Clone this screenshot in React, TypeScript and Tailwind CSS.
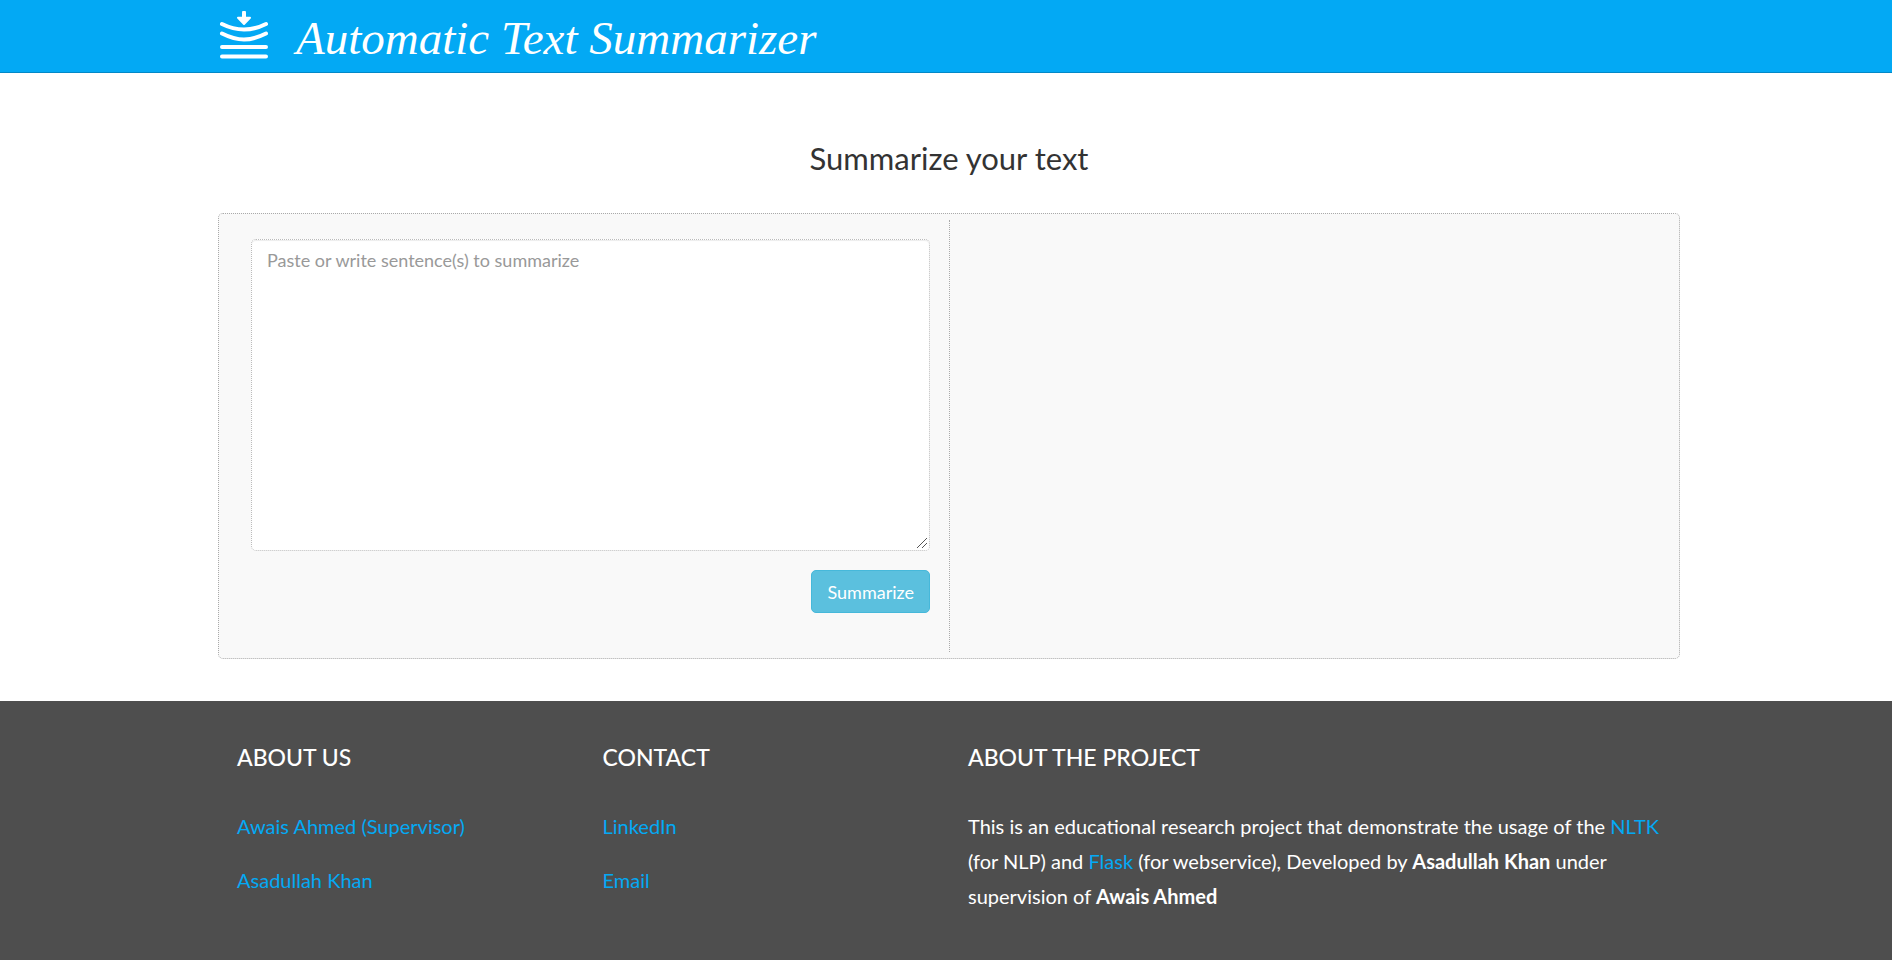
import type { ReactNode } from "react";

function LogoIcon() {
  return (
    <svg
      viewBox="0 0 50 50"
      className="h-[50px] w-[50px] shrink-0"
      fill="none"
      stroke="white"
      strokeWidth="4"
      strokeLinecap="round"
      strokeLinejoin="round"
      aria-hidden="true"
    >
      <path d="M26 1.5V8" />
      <path d="M20 6.8H32L26 13Z" fill="white" strokeWidth="2" />
      <path d="M4 13C11 16.5 17 18.5 26 18.5S41 16.5 48 13" />
      <path d="M4 22.5C11 26 17 28.5 26 28.5S41 26 48 22.5" />
      <path d="M4 36H48M4 45.5H48" />
    </svg>
  );
}

function ResizeGrip() {
  return (
    <svg
      viewBox="0 0 12 12"
      className="pointer-events-none absolute right-0.5 bottom-0.5 h-3 w-3"
      stroke="#555555"
      strokeWidth="1"
      aria-hidden="true"
    >
      <path d="M1 11L11 1M6 11L11 6" />
    </svg>
  );
}

function Container({ children }: { children: ReactNode }) {
  return (
    <div className="pl-1.5">
      <div className="mx-auto w-full max-w-[1462px]">{children}</div>
    </div>
  );
}

function FooterHeading({ children }: { children: ReactNode }) {
  return <h2 className="mb-9 text-[23px] leading-8 font-medium text-white">{children}</h2>;
}

function FooterLink({ children }: { children: ReactNode }) {
  return (
    <a href="#" className="text-[#03a9f4] hover:underline">
      {children}
    </a>
  );
}

export default function App() {
  return (
    <div className="flex min-h-screen flex-col bg-white font-[Lato,sans-serif]">
      <header className="border-b border-[#0288c7] bg-[#03a9f4]">
        <Container>
          <a href="#" className="flex h-[72px] items-center gap-7 text-white">
            <LogoIcon />
            <span className="pt-1 font-['Liberation_Serif',serif] text-[47px] leading-[60px] whitespace-nowrap italic">
              Automatic Text Summarizer
            </span>
          </a>
        </Container>
      </header>

      <main className="pt-[65px] pb-[42px]">
        <Container>
          <h1 className="mb-[35px] text-center text-[31px] leading-10 text-[#333333]">Summarize your text</h1>
          <section className="grid grid-cols-1 rounded-[5px] border border-dotted border-[#aaaaaa] bg-[#f9f9f9] py-1.5 lg:grid-cols-2">
            <form
              className="flex flex-col items-end pt-[19px] pr-[19px] pb-[39px] pl-8"
              onSubmit={(event) => event.preventDefault()}
            >
              <div className="relative w-full">
                <textarea
                  aria-label="Text to summarize"
                  placeholder="Paste or write sentence(s) to summarize"
                  className="block h-[312px] w-full resize-y rounded-[5px] border border-dotted border-[#bbbbbb] bg-white px-[15px] py-2 text-lg leading-[25px] text-[#555555] shadow-[inset_0_1px_1px_rgba(0,0,0,0.075)] placeholder:text-[#999999] [&::-webkit-resizer]:hidden"
                />
                <ResizeGrip />
              </div>
              <button
                type="submit"
                className="mt-[19px] h-[43px] rounded-[5px] border border-[#46b8da] bg-[#5bc0de] px-[15px] text-lg leading-6 text-white"
              >
                Summarize
              </button>
            </form>
            <div className="border-l border-dotted border-[#aaaaaa]" aria-live="polite" />
          </section>
        </Container>
      </main>

      <footer className="grow bg-[#4e4e4e] pt-10 pb-[38px] text-xl leading-[35px] text-white">
        <Container>
          <div className="grid grid-cols-1 sm:grid-cols-[1fr_1fr_2fr]">
            <section className="px-[19px]">
              <FooterHeading>ABOUT US</FooterHeading>
              <p className="mb-[19px]">
                <FooterLink>Awais Ahmed (Supervisor)</FooterLink>
              </p>
              <p>
                <FooterLink>Asadullah Khan</FooterLink>
              </p>
            </section>
            <section className="px-[19px]">
              <FooterHeading>CONTACT</FooterHeading>
              <p className="mb-[19px]">
                <FooterLink>LinkedIn</FooterLink>
              </p>
              <p>
                <FooterLink>Email</FooterLink>
              </p>
            </section>
            <section className="px-[19px]">
              <FooterHeading>ABOUT THE PROJECT</FooterHeading>
              <p>
                This is an educational research project that demonstrate the usage of the{" "}
                <FooterLink>NLTK</FooterLink> (for NLP) and <FooterLink>Flask</FooterLink> (for webservice),
                Developed by <strong>Asadullah Khan</strong> under supervision of <strong>Awais Ahmed</strong>
              </p>
            </section>
          </div>
        </Container>
      </footer>
    </div>
  );
}
